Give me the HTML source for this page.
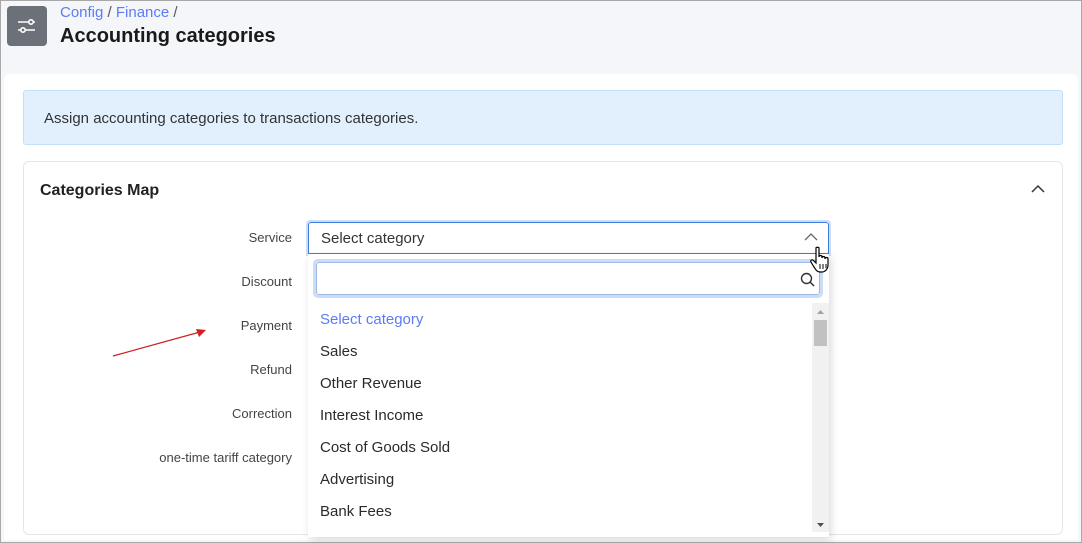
<!DOCTYPE html><html><head><style>
*{box-sizing:border-box;margin:0;padding:0}
body{width:1082px;height:543px;overflow:hidden;font-family:"Liberation Sans",sans-serif;background:#fff;position:relative}
.frame{position:absolute;inset:0;border:1px solid #a8a8a8;background:#f5f6fa}
.abs{position:absolute}
.lbl{position:absolute;right:790px;font-size:13px;color:#444;width:220px;text-align:right}
.opt{position:absolute;left:320px;font-size:15px;color:#2a2a2a}
</style></head><body>
<div class="frame"></div>
<div class="abs" style="left:7px;top:6px;width:40px;height:40px;background:#6b7079;border-radius:4px">
<svg width="40" height="40" viewBox="0 0 40 40"><g stroke="#fff" stroke-width="1.6" fill="none"><line x1="11" y1="16" x2="28" y2="16"/><circle cx="24" cy="16" r="2.2" fill="#6b7079"/><line x1="11" y1="24" x2="28" y2="24"/><circle cx="16" cy="24" r="2.2" fill="#6b7079"/></g></svg></div>
<div class="abs" style="left:60px;top:4px;font-size:15px;color:#5b7cf5">Config <span style="color:#555">/</span> Finance <span style="color:#555">/</span></div>
<div class="abs" style="left:60px;top:25px;font-size:20px;font-weight:bold;color:#1a1a1a">Accounting categories</div>
<div class="abs" style="left:4px;top:74px;width:1074px;height:466px;background:#fff;border-radius:6px 6px 0 0"></div>
<div class="abs" style="left:23px;top:90px;width:1040px;height:55px;background:#e2f0fd;border:1px solid #c3e0f8;border-radius:3px"></div>
<div class="abs" style="left:44px;top:110px;font-size:15px;color:#333">Assign accounting categories to transactions categories.</div>
<div class="abs" style="left:23px;top:161px;width:1040px;height:374px;border:1px solid #e6e6e6;border-radius:6px"></div>
<div class="abs" style="left:40px;top:182px;font-size:16px;font-weight:bold;color:#222">Categories Map</div>
<svg class="abs" style="left:1031px;top:184px" width="14" height="10"><path d="M1 8 L7 2 L13 8" stroke="#333" stroke-width="1.5" fill="none"/></svg>
<div class="lbl" style="top:230px">Service</div>
<div class="lbl" style="top:274px">Discount</div>
<div class="lbl" style="top:318px">Payment</div>
<div class="lbl" style="top:362px">Refund</div>
<div class="lbl" style="top:406px">Correction</div>
<div class="lbl" style="top:450px">one-time tariff category</div>
<svg class="abs" style="left:110px;top:325px" width="100" height="35"><line x1="3" y1="31" x2="90" y2="7" stroke="#d02020" stroke-width="1.3"/><path d="M96 5 L86 4 L89 12 Z" fill="#d02020"/></svg>
<div class="abs" style="left:306px;top:220px;width:525px;height:36px;border:2px solid #cfdcf6;border-bottom:none;border-radius:4px 4px 0 0"></div>
<div class="abs" style="left:308px;top:222px;width:521px;height:32px;border:1px solid #3b7ddd;border-radius:3px 3px 0 0;background:#fff"></div>
<div class="abs" style="left:321px;top:230px;font-size:15px;color:#333">Select category</div>
<svg class="abs" style="left:804px;top:233px" width="14" height="9"><path d="M1 7 L7 1 L13 7" stroke="#666" stroke-width="1.3" fill="none"/></svg>
<div class="abs" style="left:308px;top:254px;width:521px;height:283px;background:#fff;box-shadow:2px 3px 8px rgba(0,0,0,.15)"></div>
<div class="abs" style="left:313px;top:259px;width:510px;height:39px;border:3px solid #cbdcf7;border-radius:5px;background:#fff"><div style="position:absolute;inset:0;border:1px solid #9fb8e6;border-radius:3px"></div></div>
<svg class="abs" style="left:800px;top:272px" width="16" height="16"><circle cx="6.5" cy="6.5" r="5" stroke="#333" stroke-width="1.4" fill="none"/><line x1="10" y1="10" x2="14" y2="14" stroke="#333" stroke-width="1.5"/></svg>
<div class="opt" style="top:311px;color:#5b7cf5">Select category</div>
<div class="opt" style="top:343px">Sales</div>
<div class="opt" style="top:375px">Other Revenue</div>
<div class="opt" style="top:407px">Interest Income</div>
<div class="opt" style="top:439px">Cost of Goods Sold</div>
<div class="opt" style="top:471px">Advertising</div>
<div class="opt" style="top:503px">Bank Fees</div>
<div class="abs" style="left:812px;top:303px;width:17px;height:229px;background:#f1f1f1"></div>
<div class="abs" style="left:814px;top:320px;width:13px;height:26px;background:#c1c1c1"></div>
<svg class="abs" style="left:812px;top:305px" width="17" height="229"><path d="M5 9 L8.5 5 L12 9Z" fill="#a3a3a3"/><path d="M5 218 L12 218 L8.5 222Z" fill="#505050"/></svg>
<svg class="abs" style="left:808px;top:246px" width="26" height="28"><path d="M8 2 C8 1 11 1 11 2 L11 11 C11 9 14 9 14 11 L14 12 C14 10 17 10 17 12 L17 13 C17 11 20 11 20 13 L20 19 C20 23 17 26 14 26 L12 26 C9 26 8 24 6 21 L3 16 C2 14 4 13 6 15 L8 17 Z" fill="#fff" stroke="#000" stroke-width="1.2"/><path d="M12 18v5M15 18v5M18 18v4" stroke="#000"/></svg>
</body></html>
